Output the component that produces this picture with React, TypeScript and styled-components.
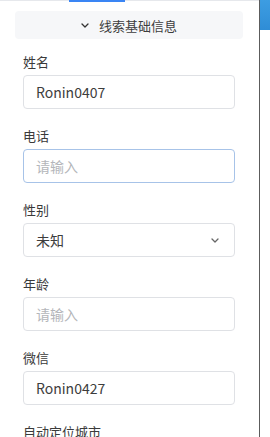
import React from "react";
import styled, { createGlobalStyle } from "styled-components";

const Global = createGlobalStyle`
  html, body { margin: 0; padding: 0; background: #fff; }
  body { font-family: "Noto Sans CJK SC", "Noto Sans", sans-serif; color: #3a3a3a; }
  * { box-sizing: border-box; }
`;

const Page = styled.div`
  display: flex;
  width: 270px;
  height: 437px;
  overflow: hidden;
`;

const Main = styled.div`
  width: 259px;
  flex: none;
  display: flex;
  flex-direction: column;
`;

const TabStrip = styled.div`
  position: relative;
  height: 2px;
  border-bottom: 1px solid #e6e8ec;
`;

const TabIndicator = styled.div`
  position: absolute;
  left: 69px;
  top: 0;
  width: 56px;
  height: 2px;
  background: #3a85f4;
`;

const Body = styled.div`
  padding: 10px 16px 0 15px;
  display: flex;
  flex-direction: column;
`;

const CollapseHeader = styled.div`
  height: 28px;
  background: #f6f7f9;
  border-radius: 4px;
  display: flex;
  align-items: center;
  justify-content: center;
  gap: 10px;
  font-size: 13px;
  color: #3d3d3d;
`;

const Fields = styled.div`
  padding: 12px 8px 0 8px;
  display: flex;
  flex-direction: column;
`;

const Field = styled.div`
  display: flex;
  flex-direction: column;
  margin-bottom: 16px;
`;

const Label = styled.div`
  font-size: 13px;
  line-height: 22px;
  color: #3a3a3a;
  margin-bottom: 2px;
`;

const Input = styled.div<{ $focused?: boolean; $placeholder?: boolean }>`
  height: 34px;
  border: 1px solid ${(p) => (p.$focused ? "#a7c3e8" : "#dfe1e5")};
  border-radius: 4px;
  padding: 0 15px 0 12px;
  display: flex;
  align-items: center;
  justify-content: space-between;
  font-size: 14px;
  color: ${(p) => (p.$placeholder ? "#b4b6ba" : "#3d3d3d")};
`;

const Divider = styled.div`
  width: 1px;
  flex: none;
  background: #5c5c5c;
`;

const Side = styled.div`
  flex: 1;
  display: flex;
  flex-direction: column;
`;

const SideTab = styled.div`
  height: 30px;
  background: linear-gradient(180deg, #3d9de2 0%, #2f8dd6 100%);
`;

const Chevron = ({ size = 8, color = "#333" }: { size?: number; color?: string }) => (
  <svg width={size} height={size / 2 + 1} viewBox="0 0 8 5" fill="none">
    <path d="M1 1 L4 4 L7 1" stroke={color} strokeWidth="1.3" strokeLinecap="round" strokeLinejoin="round" />
  </svg>
);

export default function App() {
  return (
    <Page>
      <Global />
      <Main>
        <TabStrip>
          <TabIndicator />
        </TabStrip>
        <Body>
          <CollapseHeader>
            <Chevron />
            <span>线索基础信息</span>
          </CollapseHeader>
          <Fields>
            <Field>
              <Label>姓名</Label>
              <Input>Ronin0407</Input>
            </Field>
            <Field>
              <Label>电话</Label>
              <Input $focused $placeholder>请输入</Input>
            </Field>
            <Field>
              <Label>性别</Label>
              <Input>
                <span>未知</span>
                <Chevron size={8} color="#666" />
              </Input>
            </Field>
            <Field>
              <Label>年龄</Label>
              <Input $placeholder>请输入</Input>
            </Field>
            <Field>
              <Label>微信</Label>
              <Input>Ronin0427</Input>
            </Field>
            <Field>
              <Label>自动定位城市</Label>
            </Field>
          </Fields>
        </Body>
      </Main>
      <Divider />
      <Side>
        <SideTab />
      </Side>
    </Page>
  );
}
